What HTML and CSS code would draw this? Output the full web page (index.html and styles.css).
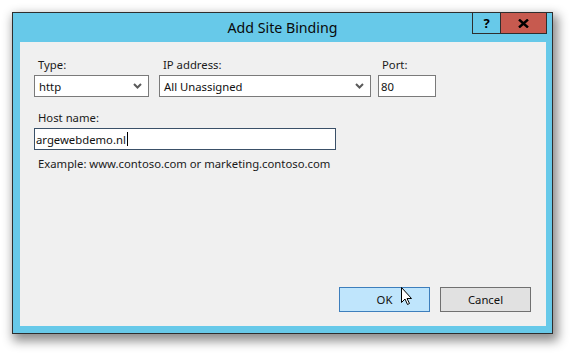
FILE: index.html
```html
<!DOCTYPE html>
<html>
<head>
<meta charset="utf-8">
<link rel="stylesheet" href="styles.css">
</head>
<body>
<div class="window">
  <div class="titlebar">
    <div class="title">Add Site Binding</div>
    <div class="caption-buttons">
      <div class="cap-btn help">?</div>
      <div class="cap-btn close">
        <svg width="11" height="9" viewBox="0 0 11 9"><path d="M1 0.5 L10 8.5 M10 0.5 L1 8.5" stroke="#000" stroke-width="2.4" fill="none"/></svg>
      </div>
    </div>
  </div>
  <div class="panel">
    <div class="row">
      <div class="field f-type">
        <div class="label">Type:</div>
        <div class="box select"><span>http</span><svg class="chev" width="9" height="6" viewBox="0 0 9 6"><path d="M1 1 L4.5 4.5 L8 1" stroke="#5a5a5a" stroke-width="2" fill="none"/></svg></div>
      </div>
      <div class="field f-ip">
        <div class="label">IP address:</div>
        <div class="box select"><span>All Unassigned</span><svg class="chev" width="9" height="6" viewBox="0 0 9 6"><path d="M1 1 L4.5 4.5 L8 1" stroke="#5a5a5a" stroke-width="2" fill="none"/></svg></div>
      </div>
      <div class="field f-port">
        <div class="label">Port:</div>
        <div class="box"><span>80</span></div>
      </div>
    </div>
    <div class="field f-host">
      <div class="label">Host name:</div>
      <div class="box focused"><span>argewebdemo.nl</span><span class="caret"></span></div>
    </div>
    <div class="example">Example: www.contoso.com or marketing.contoso.com</div>
    <div class="footer">
      <div class="btn ok">OK</div>
      <div class="btn cancel">Cancel</div>
    </div>
  </div>
</div>
<svg class="cursor" width="12" height="19" viewBox="0 0 12 19"><path d="M0.5 0.5 L0.5 15.5 L4 12 L6.5 17.5 L8.5 16.5 L6 11.5 L10.5 11.5 Z" fill="#fff" stroke="#000" stroke-width="1"/></svg>
</body>
</html>
```

FILE: styles.css
```css
*, *::before, *::after {
  box-sizing: border-box;
}
html, body {
  margin: 0;
  padding: 0;
  background: #ffffff;
}
body {
  font-family: "Noto Sans", "Open Sans", sans-serif;
  font-size: 11.3px;
  color: #1a1a1a;
  position: relative;
  width: 573px;
  height: 354px;
  overflow: hidden;
}
.window {
  margin: 12px 0 0 12px;
  width: 541px;
  height: 322px;
  border: 1px solid #2e2e2e;
  background: #67c9e9;
  box-shadow: 3px 5px 10px 2px rgba(0, 0, 0, 0.45);
  display: flex;
  flex-direction: column;
}
.titlebar {
  position: relative;
  height: 29px;
  flex: none;
}
.title {
  text-align: center;
  font-size: 14.2px;
  line-height: 30px;
  color: #0a0a0a;
}
.caption-buttons {
  position: absolute;
  top: -1px;
  right: 5px;
  display: flex;
}
.cap-btn {
  height: 22px;
  border: 1px solid #2e2e2e;
  display: flex;
  align-items: center;
  justify-content: center;
}
.help {
  width: 28px;
  font-weight: bold;
  font-size: 13px;
  color: #000;
  border-right: none;
}
.close {
  width: 47px;
  background: #c75a4f;
}
.panel {
  margin: 0 6px 7px 7px;
  flex: 1;
  background: #f0f0f0;
  padding: 15px 15px 14px 14px;
  display: flex;
  flex-direction: column;
}
.row {
  display: flex;
}
.label {
  padding-left: 4px;
  line-height: 15px;
  height: 18px;
}
.box {
  height: 22px;
  border: 1px solid #7a7a7a;
  background: #fff;
  display: flex;
  align-items: center;
  padding-left: 4px;
  color: #111;
}
.select {
  justify-content: space-between;
  padding-right: 6px;
}
.chev {
  display: block;
}
.f-type .box { width: 115px; }
.f-ip { margin-left: 10px; }
.f-ip .box { width: 212px; }
.f-port { margin-left: 7px; }
.f-port .box { width: 58px; padding-left: 2px; }
.f-host {
  margin-top: 13px;
}
.f-host .box {
  width: 302px;
  border-color: #3a5068;
  padding-left: 1px;
}
.caret {
  width: 1px;
  height: 14px;
  background: #000;
  margin-left: 1px;
}
.example {
  padding-left: 4px;
  margin-top: 6px;
  line-height: 15px;
}
.footer {
  margin-top: auto;
  display: flex;
  justify-content: flex-end;
  gap: 10px;
}
.btn {
  width: 91px;
  height: 25px;
  display: flex;
  align-items: center;
  justify-content: center;
  color: #111;
}
.ok {
  background: #bfe5fc;
  border: 1px solid #3d7ebc;
}
.cancel {
  background: #e1e1e1;
  border: 1px solid #707070;
}
.cursor {
  position: absolute;
  left: 401px;
  top: 287px;
}
```
